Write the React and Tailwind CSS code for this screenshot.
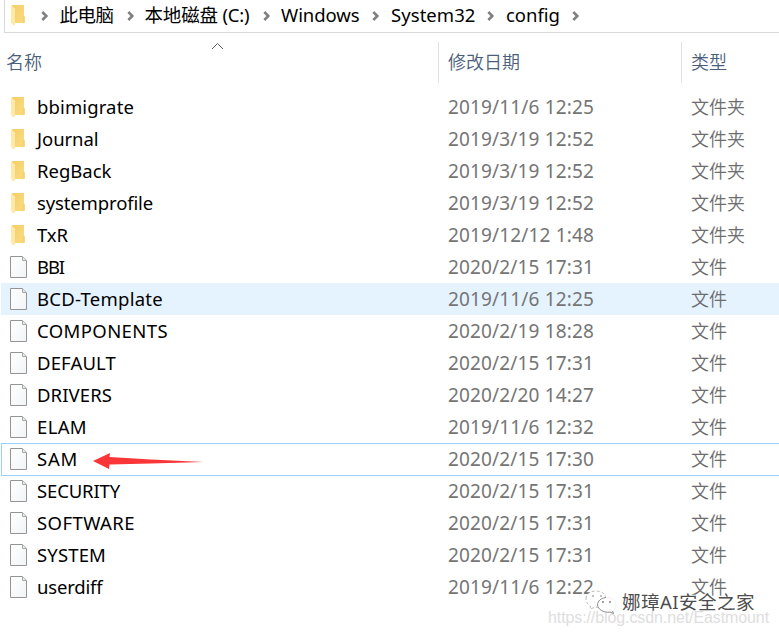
import { useLayoutEffect, useRef } from "react";

const files = [
  ["bbimigrate", 97, "2019/11/6 12:25", true],
  ["Journal", 61.5, "2019/3/19 12:52", true],
  ["RegBack", 74.5, "2019/3/19 12:52", true],
  ["systemprofile", 116, "2019/3/19 12:52", true],
  ["TxR", 31, "2019/12/12 1:48", true],
  ["BBI", 27, "2020/2/15 17:31"],
  ["BCD-Template", 126, "2019/11/6 12:25"],
  ["COMPONENTS", 131, "2020/2/19 18:28"],
  ["DEFAULT", 79, "2020/2/15 17:31"],
  ["DRIVERS", 75, "2020/2/20 14:27"],
  ["ELAM", 50, "2019/11/6 12:32"],
  ["SAM", 41, "2020/2/15 17:30"],
  ["SECURITY", 83, "2020/2/15 17:31"],
  ["SOFTWARE", 98, "2020/2/15 17:31"],
  ["SYSTEM", 69, "2020/2/15 17:31"],
  ["userdiff", 65.5, "2019/11/6 12:22"],
];

// Adjusts letter spacing so a label fills the given advance width.
function Label({ text, width, className = "" }) {
  const ref = useRef(null);
  useLayoutEffect(() => {
    const el = ref.current;
    el.style.letterSpacing = "0px";
    const natural = el.getBoundingClientRect().width;
    el.style.letterSpacing = `${(width - natural) / text.length}px`;
  }, [text, width]);
  return (
    <span ref={ref} className={`inline-block whitespace-pre ${className}`}>
      {text}
    </span>
  );
}

function Folder() {
  return (
    <svg width="16" height="22" viewBox="0 0 16 22" className="shrink-0">
      <defs>
        <linearGradient id="folderBack" x1="0" x2="1" y1="0" y2="1">
          <stop offset="0" stopColor="#f3cf68" />
          <stop offset="1" stopColor="#fbdc82" />
        </linearGradient>
      </defs>
      <path d="M2 1H14V11.5L15 12.5V19H2Z" fill="url(#folderBack)" />
      <path d="M1 1L5 4.5V20.5L4 21.8L1 19Z" fill="#ffe9a6" />
      <path d="M13.2 12V19" stroke="#f0c75e" strokeWidth=".6" />
    </svg>
  );
}

function Page() {
  return (
    <svg width="18" height="23" viewBox="0 0 18 23" className="shrink-0">
      <defs>
        <linearGradient id="paper" x1="0" x2="1" y1="0" y2="1">
          <stop offset="0" stopColor="#fff" />
          <stop offset="1" stopColor="#f1f4f6" />
        </linearGradient>
      </defs>
      <path d="M.5 .5H12.5L16.5 4.5V21.5H.5Z" fill="url(#paper)" stroke="#949494" />
      <path d="M12.5 .5V4.5H16.5" fill="#e6e6e6" stroke="#a8a8a8" />
    </svg>
  );
}

function Chevron() {
  return (
    <svg width="8" height="12" viewBox="0 0 8 12" className="shrink-0">
      <path d="M1.3 2L5.3 6L1.3 10" fill="none" stroke="#808080" strokeWidth="2.6" />
    </svg>
  );
}

function Crumb({ text, width, box }) {
  return (
    <div className={`flex shrink-0 items-center ${box}`}>
      <Label text={text} width={width} className="mr-auto -translate-y-px" />
      <Chevron />
    </div>
  );
}

export default function App() {
  return (
    <div className="relative h-[636px] w-[779px] overflow-hidden bg-white font-['Noto_Sans','Noto_Sans_CJK_SC',sans-serif] text-[18.5px] leading-8 text-black">
      <div className="ml-1 flex h-[33px] items-center border-b border-l border-[#d9d9d9] pl-[5px]">
        <div className="-translate-y-px"><Folder /></div>
        <div className="ml-[15px] w-[18.5px] shrink-0 flex items-center"><Chevron /></div>
        <Crumb text="此电脑" width={54} box="w-[75px] mr-[10px]" />
        <Crumb text="本地磁盘 (C:)" width={105} box="w-[126px] mr-[10.5px]" />
        <Crumb text="Windows" width={78.5} box="w-[99px] mr-[11px]" />
        <Crumb text="System32" width={84.5} box="w-[104px] mr-[11px]" />
        <Crumb text="config" width={54} box="w-[74px]" />
      </div>

      <div className="relative mt-[9px] grid h-10 grid-cols-[438px_243px_1fr] text-[18px] font-[350] leading-[41px] text-[#4a5f7b]">
        <div className="pl-[6px]"><Label text="名称" width={36} /></div>
        <div className="border-l border-[#e2e2e2] pl-[9px]"><Label text="修改日期" width={72} /></div>
        <div className="border-l border-[#e2e2e2] pl-[9px]"><Label text="类型" width={36} /></div>
        <svg width="14" height="8" className="absolute left-[211px] top-0">
          <path d="M1 7L6.5 1.5L12 7" fill="none" stroke="#606060" />
        </svg>
      </div>

      <div className="mt-[9px]">
        {files.map(([name, width, date, folder]) => (
          <div
            key={name}
            className={`relative ml-px grid h-8 grid-cols-[36px_411px_243px_1fr] items-center ${
              name === "BCD-Template" ? "bg-[#e5f3ff]" : ""
            }`}
          >
            {name === "SAM" && (
              <div className="absolute -right-1 bottom-[-1px] left-0 top-0 border border-[#99d1ff]" />
            )}
            <div className="pl-[9px]">{folder ? <Folder /> : <Page />}</div>
            <Label text={name} width={width} className="justify-self-start" />
            <Label text={date} width={146} className="justify-self-start text-[19px] text-[#757575]" />
            <Label
              text={folder ? "文件夹" : "文件"}
              width={folder ? 54 : 36}
              className="justify-self-start text-[18px] font-[350] text-[#6d6d6d]"
            />
            {name === "SAM" && (
              <svg width="112" height="18" viewBox="0 0 112 18" className="absolute left-[92px] top-[9px]">
                <path d="M0 9L17 1L16.5 5L58 7.5L111 10L58 11.5L16.5 12.5L16 17Z" fill="#fb3638" />
              </svg>
            )}
          </div>
        ))}
      </div>

      <div className="absolute left-[548px] top-[607px] font-['Liberation_Sans',sans-serif] text-[16px] leading-[22px] text-[#dedede]">
        <Label text="https://blog.csdn.net/Eastmount" width={221} />
      </div>
      <div className="absolute left-[585px] top-[588px] flex items-start">
        <svg width="34" height="28" viewBox="0 0 34 28" fill="white" stroke="#777" strokeWidth=".8">
          <path d="M1 11C1 6 5 3 11 3S20 6 21 10L14 20L11 19L5 21L5.5 18C2.5 16 1 14 1 11Z" stroke="#aaa" strokeDasharray="3 2" />
          <path d="M12.5 17C12.5 12.5 17 9.5 22 9.5S31 13 31 17C31 20 30 22 27.5 23L28.5 25.5L25 24.2C18 25.5 12.5 22 12.5 17Z" stroke="#eee" />
          <path d="M21 9.5C16 10 12.5 13 12.5 17C13 21 18 24.8 25 24.2L28.5 25.5L27.5 23" fill="none" />
          <g fill="#777" stroke="none">
            <circle cx="8" cy="8" r=".8" /><circle cx="16" cy="8" r=".8" />
            <circle cx="18" cy="14" r=".9" /><circle cx="25" cy="14" r=".9" />
          </g>
        </svg>
        <Label
          text="娜璋AI安全之家"
          width={133}
          className="ml-[3px] text-[18.5px] leading-7 text-[#4d4d4d] [text-shadow:-1px_-1px_0_white]"
        />
      </div>
    </div>
  );
}
